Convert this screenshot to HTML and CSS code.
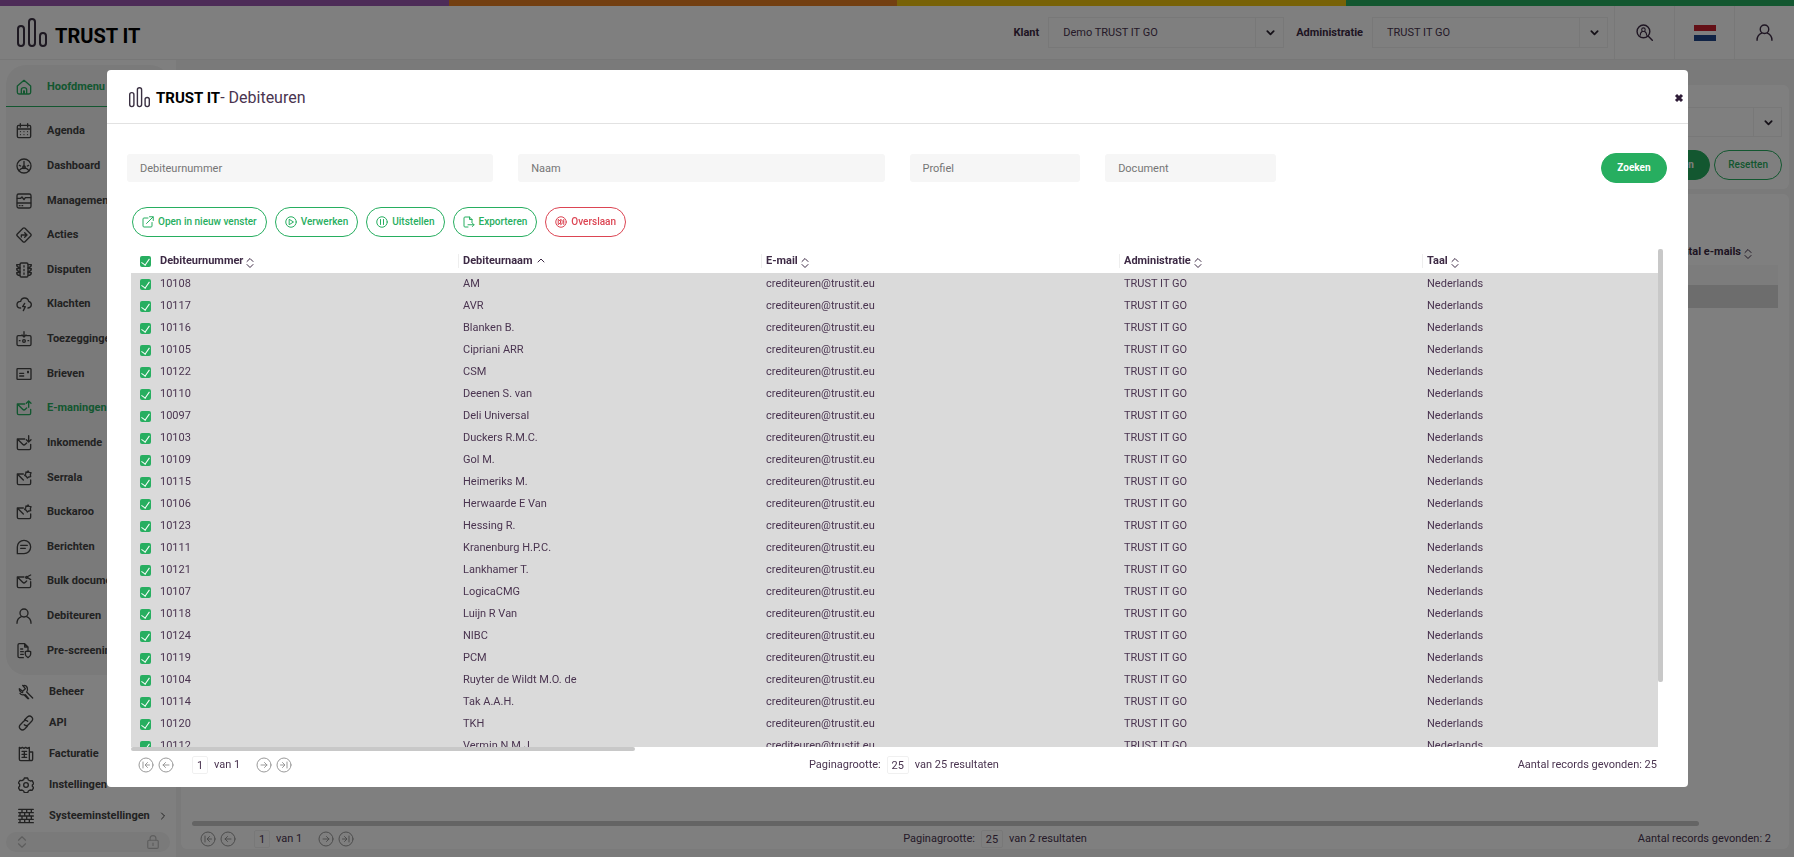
FILE: index.html
```html
<!DOCTYPE html>
<html lang="nl">
<head>
<meta charset="utf-8">
<title>TRUST IT - Debiteuren</title>
<link rel="stylesheet" href="styles.css">
</head>
<body>
<svg class="sprite" aria-hidden="true">
  <symbol id="logo" viewBox="0 0 30 30"><rect x="1" y="8" width="6" height="20" rx="3"/><rect x="12" y="1" width="6" height="27" rx="3"/><rect x="23" y="15" width="6" height="13" rx="3"/></symbol>
  <symbol id="home" viewBox="0 0 24 24"><path d="M2 10.500 12 2l10 8.500V20q0 2.500-2.500 2.500h-15Q2 22.500 2 20zM8 22v-6q0-3 4-3t4 3v6M11.500 22v-4h1v4"/></symbol>
  <symbol id="calendar" viewBox="0 0 24 24"><path d="M4 3.500h16q2 0 2 2V20q0 2-2 2H4q-2 0-2-2V5.500q0-2 2-2zM2 9h20M6.500 1v5M17.500 1v5"/><path stroke-width="1.500" d="M6.500 13h.500M11.700 13h.500M17 13h.500M6.500 17.500h.500M11.700 17.500h.500M17 17.500h.500"/></symbol>
  <symbol id="gauge" viewBox="0 0 24 24"><circle cx="12" cy="12" r="10.500"/><path d="M12 5v9M4.500 19q3-4 7.500-4t7.500 4M5 11l2 1M19 11l-2 1"/><circle cx="12" cy="14" r="2"/></symbol>
  <symbol id="monitor" viewBox="0 0 24 24"><rect x="1.500" y="1.500" width="21" height="21" rx="2.500"/><path d="M2 8h5l2-2 3 4 2-3h8M2 15h20M5 19h1m3 0h1"/></symbol>
  <symbol id="action" viewBox="0 0 24 24"><path d="M10.500 2q1.500-1.500 3 0l8.500 8.500q1.500 1.500 0 3L13.500 22q-1.500 1.500-3 0L2 13.500q-1.500-1.500 0-3zM8 15v-3h8M13 8.500l3.500 3.500-3.500 3.500"/></symbol>
  <symbol id="traffic" viewBox="0 0 24 24"><rect x="6" y="1.500" width="12" height="21" rx="2"/><path d="M12 5.500v2M12 11v2M12 16.500v2M6 4H1q0 4 5 4M6 10H1q0 4 5 4M6 16H1q0 4 5 4M18 4h5q0 4-5 4M18 10h5q0 4-5 4M18 16h5q0 4-5 4"/></symbol>
  <symbol id="cloud" viewBox="0 0 24 24"><path d="M7 18q-5.500 0-5.500-5T7 8q1-5 6-5t6 5q4 1 4 5t-5 5M13 11l-3 5h4l-3 6"/></symbol>
  <symbol id="promise" viewBox="0 0 24 24"><path d="M8 7H3.500q-2 0-2 2v11q0 2 2 2h17q2 0 2-2V9q0-2-2-2H16M12 1v8M9 6l3 3 3-3M5 14.500h1m12 0h1"/><circle cx="12" cy="15" r="2"/></symbol>
  <symbol id="card" viewBox="0 0 24 24"><rect x="1.500" y="4" width="21" height="16" rx="1"/><path d="M5.500 11h6M5.500 15h6M17.500 8h1v2h-1z"/></symbol>
  <symbol id="mail-up" viewBox="0 0 24 24"><path d="M13 6H2v14q0 2 2 2h16q2 0 2-2v-6M2 6l8 8q2 2 4 0l2-2M19 11V2M15.500 5 19 1.500 22.500 5"/></symbol>
  <symbol id="mail-down" viewBox="0 0 24 24"><path d="M13 6H2v14q0 2 2 2h16q2 0 2-2v-6M2 6l8 8q2 2 4 0l2-2M19 1v9M15.500 7 19 10.500 22.500 7"/></symbol>
  <symbol id="mail-gear" viewBox="0 0 24 24"><path d="M11 6H2v14q0 2 2 2h16q2 0 2-2v-5M2 6l9 9M18 1.500l1.500 2 3 .500-1 3 .500 3-3 .500-2 1.500-1.500-2.500-2.500-1.500 1.500-2 .500-3 2.500.500z"/></symbol>
  <symbol id="chat" viewBox="0 0 24 24"><path d="M2 22V12A10 10 0 1 1 12 22zM7 9.500h10M7 14h7"/></symbol>
  <symbol id="mail-share" viewBox="0 0 24 24"><path d="M12 6H2v14q0 2 2 2h16q2 0 2-2v-7M2 6l8 8q2 2 4 0l2-2M22 3l-6 3 6 4"/><circle cx="16" cy="6.500" r="1.500"/></symbol>
  <symbol id="user" viewBox="0 0 24 24"><circle cx="12" cy="7.500" r="6"/><path d="M1.500 23q0-7.500 6.500-10M22.500 23q0-7.500-6.500-10"/></symbol>
  <symbol id="doc-shield" viewBox="0 0 24 24"><path d="M11 22H5q-2 0-2-2V3q0-2 2-2h8l5 5v4M13 1v5h5M7 9h3M7 13h4M7 17h4M14 13l4-1 4 1v4q0 3-4 5-4-2-4-5z"/></symbol>
  <symbol id="wrench" viewBox="0 0 24 24"><path d="M9 2q4 0 5 4t-1 6l9 9M11 16l5 6M7 13q-5-1-5-6l5 4 4-4-4-5M3 14q2 3 6 2l6 6"/></symbol>
  <symbol id="link" viewBox="0 0 24 24"><path d="M10 7l4-4q3.500-3 6.500 0t0 6.500l-5 5q-3 3-6 0M14 17l-4 4q-3.500 3-6.500 0t0-6.500l5-5q3-3 6 0"/></symbol>
  <symbol id="invoice" viewBox="0 0 24 24"><path d="M2 2l2 1.500L6.500 2 9 3.500 11.500 2 14 3.500 17 2v20H4q-2 0-2-2zM17 9h5v10q0 3-2.500 3T17 19M6 8h7M6 12.500h7M6 17h7M9.500 8v9"/></symbol>
  <symbol id="gear" viewBox="0 0 24 24"><path d="M9.500 1.500h5l1 3 3 1.500 3-.500 2 4.500-2 2 0 2 2 2-2.500 4-3-.500-2.500 1.500-1 2.500h-5l-1-2.500L6 19.500l-3 .500L.500 16l2-2v-3l-2-2 2.500-4 3 .500 2.500-1.500z"/><circle cx="12" cy="12" r="3.500"/></symbol>
  <symbol id="wall" viewBox="0 0 24 24"><path d="M1 2h22M1 7h22M1 12h22M1 17h22M1 22h22M6 2v5M13 2v5M20 2v5M3 7v5M10 7v5M17 7v5M6 12v5M13 12v5M20 12v5M3 17v5M10 17v5M17 17v5"/></symbol>
  <symbol id="lock" viewBox="0 0 24 24"><rect x="3" y="9" width="18" height="14" rx="2"/><path d="M7 9V6q0-5 5-5t5 5v3M12 14v4"/></symbol>
  <symbol id="search-user" viewBox="0 0 24 24"><circle cx="10.500" cy="10.500" r="9"/><path d="M17 17l6 6"/><g stroke-width="1.500"><circle cx="10.500" cy="8" r="2.500"/><path d="M6 16q0-4.500 3-5.500M15 16q0-4.500-3-5.500"/></g></symbol>
  <symbol id="open" viewBox="0 0 24 24"><path d="M12 4H4q-2 0-2 2v14q0 2 2 2h14q2 0 2-2v-7M15 1.500h7.500V9M22 2 9 15"/></symbol>
  <symbol id="play" viewBox="0 0 24 24"><circle cx="12" cy="12" r="10.500"/><path d="M9 7l8 5-8 5z"/></symbol>
  <symbol id="pause" viewBox="0 0 24 24"><circle cx="12" cy="12" r="10.500"/><path d="M9 7v10M15 7v10"/></symbol>
  <symbol id="skip" viewBox="0 0 24 24"><circle cx="12" cy="12" r="10.500"/><path d="M7 7l5 5-5 5zM12 7l5 5-5 5zM17.500 7v10"/></symbol>
  <symbol id="export" viewBox="0 0 24 24"><path d="M10 22H4q-2 0-2-2V4q0-2 2-2h9l5 5v6M13 2v5h5M10 17.500h12M18.500 14l3.500 3.500-3.500 3.500"/></symbol>
  <symbol id="down" viewBox="0 0 10 10"><path d="M1.500 3.500 5 7l3.500-3.500"/></symbol>
  <symbol id="right" viewBox="0 0 10 10"><path d="M3.500 2 6.500 5 3.500 8"/></symbol>
  <symbol id="up" viewBox="0 0 10 10"><path d="M2 5l3-3 3 3"/></symbol>
  <symbol id="sort" viewBox="0 0 8 12"><path d="M1 4.500 4 1.500l3 3M1 7.500l3 3 3-3"/></symbol>
  <symbol id="first" viewBox="0 0 16 16"><circle cx="8" cy="8" r="7"/><path d="M5 5v6M11.500 8H7.500M9.500 5.500 7 8l2.500 2.500"/></symbol>
  <symbol id="prev" viewBox="0 0 16 16"><circle cx="8" cy="8" r="7"/><path d="M11 8H5M7.500 5.500 5 8l2.500 2.500"/></symbol>
  <symbol id="next" viewBox="0 0 16 16"><circle cx="8" cy="8" r="7"/><path d="M5 8h6M8.500 5.500 11 8l-2.500 2.500"/></symbol>
  <symbol id="last" viewBox="0 0 16 16"><circle cx="8" cy="8" r="7"/><path d="M11 5v6M4.500 8h4M6.500 5.500 9 8l-2.500 2.500"/></symbol>
  <symbol id="cross" viewBox="0 0 10 10"><path d="M2 2l6 6M8 2l-6 6"/></symbol>
</svg>

<div class="app">
  <div class="stripe"><i class="purple"></i><i class="orange"></i><i class="yellow"></i><i class="green"></i></div>
  <header class="topbar">
    <div class="brand"><svg class="brand-mark"><use href="#logo"/></svg><span class="brand-name">TRUST IT</span></div>
    <div class="top-tools">
      <label class="top-label" for="klant">Klant</label>
      <div class="select"><select id="klant"><option>Demo TRUST IT GO</option></select><svg class="icon caret"><use href="#down"/></svg></div>
      <label class="top-label" for="admin">Administratie</label>
      <div class="select"><select id="admin"><option>TRUST IT GO</option></select><svg class="icon caret"><use href="#down"/></svg></div>
      <div class="top-icons">
        <button class="top-icon" aria-label="Zoek debiteur"><svg class="icon"><use href="#search-user"/></svg></button>
        <button class="top-icon" aria-label="Taal"><span class="flag"></span></button>
        <button class="top-icon" aria-label="Account"><svg class="icon"><use href="#user"/></svg></button>
      </div>
    </div>
  </header>
  <div class="body">
    <nav class="sidebar">
      <div class="menu">
        <a class="item main-item" href="#"><svg class="icon"><use href="#home"/></svg>Hoofdmenu</a>
        <div class="menu-list">
          <a class="item" href="#"><svg class="icon"><use href="#calendar"/></svg>Agenda</a>
          <a class="item" href="#"><svg class="icon"><use href="#gauge"/></svg>Dashboard</a>
          <a class="item" href="#"><svg class="icon"><use href="#monitor"/></svg>Management</a>
          <a class="item" href="#"><svg class="icon"><use href="#action"/></svg>Acties</a>
          <a class="item" href="#"><svg class="icon"><use href="#traffic"/></svg>Disputen</a>
          <a class="item" href="#"><svg class="icon"><use href="#cloud"/></svg>Klachten</a>
          <a class="item" href="#"><svg class="icon"><use href="#promise"/></svg>Toezeggingen</a>
          <a class="item" href="#"><svg class="icon"><use href="#card"/></svg>Brieven</a>
          <a class="item active" href="#"><svg class="icon"><use href="#mail-up"/></svg>E-maningen</a>
          <a class="item" href="#"><svg class="icon"><use href="#mail-down"/></svg>Inkomende</a>
          <a class="item" href="#"><svg class="icon"><use href="#mail-gear"/></svg>Serrala</a>
          <a class="item" href="#"><svg class="icon"><use href="#mail-gear"/></svg>Buckaroo</a>
          <a class="item" href="#"><svg class="icon"><use href="#chat"/></svg>Berichten</a>
          <a class="item" href="#"><svg class="icon"><use href="#mail-share"/></svg>Bulk documenten</a>
          <a class="item" href="#"><svg class="icon"><use href="#user"/></svg>Debiteuren</a>
          <a class="item" href="#"><svg class="icon"><use href="#doc-shield"/></svg>Pre-screening</a>
        </div>
      </div>
      <div class="settings">
        <a class="item" href="#"><svg class="icon"><use href="#wrench"/></svg>Beheer</a>
        <a class="item" href="#"><svg class="icon"><use href="#link"/></svg>API</a>
        <a class="item" href="#"><svg class="icon"><use href="#invoice"/></svg>Facturatie</a>
        <a class="item" href="#"><svg class="icon"><use href="#gear"/></svg>Instellingen</a>
        <a class="item" href="#"><svg class="icon"><use href="#wall"/></svg>Systeeminstellingen<svg class="icon more"><use href="#right"/></svg></a>
      </div>
      <div class="side-foot"><svg class="icon foot-sort"><use href="#sort"/></svg><svg class="icon foot-lock"><use href="#lock"/></svg></div>
    </nav>
    <main class="content">
      <section class="panel filters">
        <div class="select wide"><select aria-label="Filter"><option></option></select><svg class="icon caret"><use href="#down"/></svg></div>
        <div class="filter-buttons"><button class="pill solid">Zoeken</button><button class="pill">Resetten</button></div>
      </section>
      <section class="panel results">
        <div class="results-head">Aantal e-mails<svg class="icon sort"><use href="#sort"/></svg></div>
        <div class="results-row"></div>
        <div class="results-row selected"></div>
        <div class="results-scroll"></div>
        <div class="pager">
          <div class="pager-part">
            <button aria-label="Eerste"><svg class="icon"><use href="#first"/></svg></button><button aria-label="Vorige"><svg class="icon"><use href="#prev"/></svg></button>
            <input class="page-no" aria-label="Pagina" value="1"><span class="pages">van 1</span>
            <button aria-label="Volgende"><svg class="icon"><use href="#next"/></svg></button><button aria-label="Laatste"><svg class="icon"><use href="#last"/></svg></button>
          </div>
          <div class="pager-part"><label for="size-a">Paginagrootte:</label><input class="page-size" id="size-a" value="25"><span>van 2 resultaten</span></div>
          <div>Aantal records gevonden: 2</div>
        </div>
      </section>
    </main>
  </div>
</div>

<div class="backdrop">
  <div class="modal" role="dialog" aria-label="Debiteuren">
    <div class="modal-head">
      <svg class="brand-mark"><use href="#logo"/></svg><span class="brand-name">TRUST IT</span><h1>- Debiteuren</h1>
      <button class="close" aria-label="Sluiten"><svg class="icon"><use href="#cross"/></svg></button>
    </div>
    <form class="search">
      <input class="span2" placeholder="Debiteurnummer" aria-label="Debiteurnummer">
      <input class="span2" placeholder="Naam" aria-label="Naam">
      <input placeholder="Profiel" aria-label="Profiel">
      <input placeholder="Document" aria-label="Document">
      <button type="button" class="pill solid">Zoeken</button>
    </form>
    <div class="actions">
      <button class="pill"><svg class="icon"><use href="#open"/></svg>Open in nieuw venster</button>
      <button class="pill"><svg class="icon"><use href="#play"/></svg>Verwerken</button>
      <button class="pill"><svg class="icon"><use href="#pause"/></svg>Uitstellen</button>
      <button class="pill"><svg class="icon"><use href="#export"/></svg>Exporteren</button>
      <button class="pill red"><svg class="icon"><use href="#skip"/></svg>Overslaan</button>
    </div>
    <div class="grid-wrap">
      <div class="grid-view">
        <table class="grid">
          <colgroup><col class="c-check"><col class="c-text"><col class="c-text"><col class="c-mail"><col class="c-text"><col></colgroup>
          <thead><tr>
            <th><input type="checkbox" checked aria-label="Alles selecteren"></th>
            <th>Debiteurnummer<svg class="icon sort"><use href="#sort"/></svg></th>
            <th><span class="split"></span>Debiteurnaam<svg class="icon up"><use href="#up"/></svg></th>
            <th><span class="split"></span>E-mail<svg class="icon sort"><use href="#sort"/></svg></th>
            <th><span class="split"></span>Administratie<svg class="icon sort"><use href="#sort"/></svg></th>
            <th><span class="split"></span>Taal<svg class="icon sort"><use href="#sort"/></svg></th>
          </tr></thead>
          <tbody id="rows"></tbody>
        </table>
      </div>
      <div class="v-track"><div class="v-thumb"></div></div>
    </div>
    <div class="h-track"><div class="h-thumb"></div></div>
    <div class="pager">
      <div class="pager-part">
        <button aria-label="Eerste"><svg class="icon"><use href="#first"/></svg></button><button aria-label="Vorige"><svg class="icon"><use href="#prev"/></svg></button>
        <input class="page-no" aria-label="Pagina" value="1"><span class="pages">van 1</span>
        <button aria-label="Volgende"><svg class="icon"><use href="#next"/></svg></button><button aria-label="Laatste"><svg class="icon"><use href="#last"/></svg></button>
      </div>
      <div class="pager-part"><label for="size-b">Paginagrootte:</label><input class="page-size" id="size-b" value="25"><span>van 25 resultaten</span></div>
      <div>Aantal records gevonden: 25</div>
    </div>
  </div>
</div>
<script src="script.js"></script>
</body>
</html>
```
FILE: script.js
```js
const debtors = [
  ["10108", "AM"], ["10117", "AVR"], ["10116", "Blanken B."], ["10105", "Cipriani ARR"],
  ["10122", "CSM"], ["10110", "Deenen S. van"], ["10097", "Deli Universal"], ["10103", "Duckers R.M.C."],
  ["10109", "Gol M."], ["10115", "Heimeriks M."], ["10106", "Herwaarde E Van"], ["10123", "Hessing R."],
  ["10111", "Kranenburg H.P.C."], ["10121", "Lankhamer T."], ["10107", "LogicaCMG"], ["10118", "Luijn R Van"],
  ["10124", "NIBC"], ["10119", "PCM"], ["10104", "Ruyter de Wildt M.O. de"], ["10114", "Tak A.A.H."],
  ["10120", "TKH"], ["10112", "Vermin N.M.J."]
];
document.getElementById("rows").innerHTML = debtors.map(([no, name]) =>
  `<tr><td><input type="checkbox" checked aria-label="Selecteer ${no}"></td><td>${no}</td><td>${name}</td>` +
  `<td>crediteuren@trustit.eu</td><td>TRUST IT GO</td><td>Nederlands</td></tr>`
).join("");
```
FILE: styles.css
```css
* { box-sizing: border-box; }
body {
  margin: 0;
  font: 11px/16px Roboto, "Liberation Sans", sans-serif;
  color: #4a3450;
  overflow: hidden;
}
input, select, button { font: inherit; color: inherit; margin: 0; }
button { background: none; border: 0; padding: 0; display: flex; align-items: center; justify-content: center; }
a { color: inherit; text-decoration: none; }
.sprite { position: absolute; width: 0; height: 0; }
.icon { fill: none; stroke: currentColor; stroke-width: 2; stroke-linecap: round; stroke-linejoin: round; flex: none; }

/* application frame */
.app { display: flex; flex-direction: column; height: 100vh; background: #f4f4f4; }
.stripe { display: flex; height: 6px; }
.stripe i { flex: 1; }
.purple { background: #9b59b0; }
.orange { background: #e67e22; }
.yellow { background: #f1c40f; }
.green { background: #27ae60; }

.topbar { display: flex; justify-content: space-between; height: 54px; background: #fff; border-bottom: 1px solid #eee; }
.brand { display: flex; align-items: center; gap: 8px; padding-left: 17px; }
.brand-mark { width: 30px; height: 30px; fill: none; stroke: #3a3042; stroke-width: 2; }
.brand-name { font-size: 20px; line-height: 24px; font-weight: 700; color: #000; }
.brand .brand-name { padding-top: 6px; }
.top-tools { display: flex; align-items: center; }
.top-label { font-weight: 700; color: #3d2a45; margin: 0 9px 0 12px; }
.select { position: relative; width: 236px; height: 31px; }
.select select { appearance: none; width: 100%; height: 100%; padding: 0 14px; background: #fff; border: 1px solid #f0f0f0; border-radius: 0; }
.select::after { content: ""; position: absolute; top: 0; right: 28px; height: 100%; border-left: 1px solid #f0f0f0; }
.caret { position: absolute; right: 9px; top: 11px; width: 9px; height: 9px; color: #2b2230; }
.select.wide { width: 100%; height: 30px; }
.top-icons { display: flex; height: 100%; margin-left: 6px; }
.top-icon { width: 60px; border-left: 1px solid #f0f0f0; color: #3d2a45; }
.top-icon .icon { width: 17px; height: 17px; }
.flag { width: 22px; height: 16px; background: linear-gradient(#c8202f 0 35%, #fff 35% 65%, #21468b 65%); }

.body { flex: 1; display: flex; min-height: 0; }
.sidebar { width: 176px; display: flex; flex-direction: column; padding: 5px 6px; background: #fff; font-weight: 700; color: #444; }
.menu { flex: 1; display: flex; flex-direction: column; background: #f4f4f4; border-radius: 20px; overflow: hidden; padding-bottom: 7px; }
.item { display: flex; align-items: center; gap: 15px; padding-left: 10px; white-space: nowrap; }
.item .icon { width: 16px; height: 16px; }
.main-item { height: 42px; padding-top: 3px; color: #27ae60; border-bottom: 1px solid #27ae60; }
.item.active { color: #27ae60; }
.menu-list { flex: 1; display: flex; flex-direction: column; padding-top: 7px; }
.menu-list .item { flex: 1; }
.settings { padding: 1px 0 1px 2px; }
.settings .item { height: 31px; }
.item .more { width: 10px; height: 10px; stroke-width: 1; margin-left: -7px; }
.side-foot { display: flex; align-items: center; justify-content: space-between; height: 20px; padding: 0 10px; border-radius: 10px; background: #f4f4f4; color: #bbb; }
.foot-sort { width: 12px; height: 14px; stroke-width: 1; }
.foot-lock { width: 14px; height: 14px; }

.content { flex: 1; display: flex; flex-direction: column; gap: 5px; padding: 25px 5px 8px; }
.panel { background: #fff; border-radius: 6px; }
.filters { padding: 22px 7px 9px; }
.filter-buttons { display: flex; justify-content: flex-end; gap: 4px; padding-top: 13px; }
.results { flex: 1; display: flex; flex-direction: column; padding: 50px 11px 0; }
.results-head { display: flex; align-items: flex-end; justify-content: flex-end; gap: 3px; padding: 0 26px 5px 0; font-weight: 700; color: #3d2a45; }
.results-row { height: 20px; background: #f9f9f9; }
.results-row.selected { height: 23px; background: #dadada; }
.results-scroll { height: 5px; width: 95%; margin-top: auto; border-radius: 3px; background: #c8c8c8; }
.results .pager { padding: 4px 7px 1px 8px; }

/* shared pieces */
.pill { height: 30px; padding: 0 13px; gap: 4px; border: 1px solid #27ae60; border-radius: 15px; color: #27ae60; font-size: 10px; font-weight: 500; white-space: nowrap; }
.filters .pill, .search .pill { min-width: 66px; }
.pill.solid { background: #27ae60; color: #fff; font-weight: 700; }
.pill.red { border-color: #dc4553; color: #dc4553; }
.pill .icon { width: 12px; height: 12px; }
.sort { width: 8px; height: 12px; stroke-width: 1; }
.pager { display: flex; align-items: center; justify-content: space-between; }
.pager-part { display: flex; align-items: center; gap: 6px; }
.pager button { color: #999; margin-right: -2px; }
.pager .icon { width: 16px; height: 16px; stroke-width: 1; }
.page-no, .page-size { height: 18px; padding: 0; text-align: center; background: transparent; border: 1px solid #f0f0f0; border-radius: 2px; }
.page-no { width: 16px; margin-left: 14px; }
.page-size { width: 22px; }
.pages { margin-right: 10px; }

/* dialog */
.backdrop { position: fixed; inset: 0; display: flex; padding: 70px 106px 70px 107px; background: rgba(0, 0, 0, .5); }
.modal { flex: 1; min-width: 0; display: flex; flex-direction: column; background: #fff; border-radius: 4px; }
.modal-head { display: flex; align-items: center; height: 54px; padding: 2px 4px 0 22px; border-bottom: 1px solid #e2e2e2; }
.modal-head .brand-mark { width: 21px; height: 21px; margin-right: 6px; }
.modal-head .brand-name { font-size: 15px; }
.modal-head h1 { margin: 0 auto 0 0; font-size: 16px; line-height: 24px; font-weight: 400; }
.close { color: #2f1d38; }
.close .icon { width: 10px; height: 10px; stroke-width: 3; stroke-linecap: butt; }
.search { display: grid; grid-template-columns: repeat(8, 1fr); gap: 25px; align-items: center; padding: 29px 21px 0 20px; }
.search input { width: 100%; height: 28px; padding: 0 13px; border: 0; border-radius: 3px; background: #f6f6f6; }
.search input::placeholder { color: #757575; }
.search .span2 { grid-column: span 2; }
.search .pill { grid-column: 8; justify-self: end; }
.actions { display: flex; gap: 8px; padding: 24px 25px 12px; }
.actions .pill { padding: 0 9px; }
.grid-wrap { flex: 1; min-height: 0; display: flex; padding: 0 25px 0 24px; }
.grid-view { flex: 1; overflow: hidden; }
.grid { width: 100%; table-layout: fixed; border-collapse: collapse; }
.c-check { width: 29px; }
.c-text { width: 303px; }
.c-mail { width: 358px; }
.grid th { height: 24px; padding: 0; text-align: left; white-space: nowrap; color: #3d2a45; }
.grid td { height: 22px; padding: 0; background: #dadada; white-space: nowrap; }
.grid th .icon { margin-left: 3px; vertical-align: bottom; }
.grid .up { width: 10px; height: 14px; stroke-width: 1; }
.split { display: inline-block; height: 14px; margin-left: -5px; margin-right: 4px; border-left: 1px solid #eee; vertical-align: middle; }
.grid input { appearance: none; display: block; width: 11px; height: 11px; margin-left: 9px; border-radius: 2px; background: #27ae60; }
.grid input::after { content: ""; display: block; width: 4px; height: 7px; margin: 0 auto; border: solid #fff; border-width: 0 1px 1px 0; transform: translateY(1px) rotate(35deg); }
.v-track { width: 5px; }
.v-thumb { height: 87%; background: #c8c8c8; border-radius: 2px; }
.h-track { padding: 0 30px 0 24px; }
.h-thumb { width: 33%; height: 4px; background: #c8c8c8; border-radius: 2px; }
.modal > .pager { padding: 5px 31px 13px 31px; }
```
